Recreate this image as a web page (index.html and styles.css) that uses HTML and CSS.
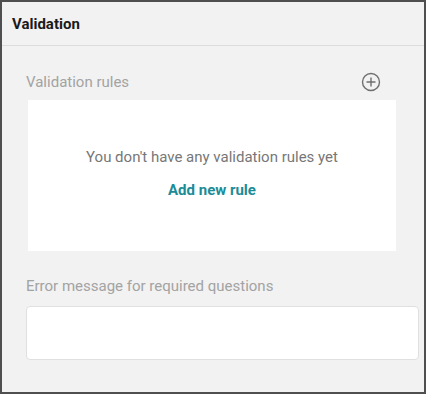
FILE: index.html
```html
<!DOCTYPE html>
<html>
<head>
<meta charset="utf-8">
<link rel="stylesheet" href="styles.css">
</head>
<body>
<div class="panel">
  <div class="panel-header">Validation</div>
  <div class="panel-body">
    <div class="rules-head">
      <span class="label">Validation rules</span>
      <span class="add-btn">
        <svg width="20" height="20" viewBox="0 0 20 20">
          <circle cx="10" cy="10" r="8.5" fill="none" stroke="#6f6f6f" stroke-width="1.4"/>
          <path d="M10 5.5v9M5.5 10h9" stroke="#6f6f6f" stroke-width="1.4" fill="none"/>
        </svg>
      </span>
    </div>
    <div class="rules-box">
      <p class="empty">You don't have any validation rules yet</p>
      <span class="add-link">Add new rule</span>
    </div>
    <div class="label err-label">Error message for required questions</div>
    <div class="err-input"></div>
  </div>
</div>
</body>
</html>
```
FILE: styles.css
```css
html, body {
  margin: 0;
  padding: 0;
  background: #ffffff;
}
body {
  font-family: Roboto, "Liberation Sans", sans-serif;
}
.panel {
  width: 426px;
  height: 394px;
  box-sizing: border-box;
  border: 2px solid #4f4f4f;
  background: #f2f2f2;
  display: flex;
  flex-direction: column;
}
.panel-header {
  height: 44px;
  box-sizing: border-box;
  border-bottom: 1px solid #dcdcdc;
  padding-left: 10px;
  padding-top: 1px;
  display: flex;
  align-items: center;
  font-size: 15px;
  font-weight: 700;
  color: #1a1a1a;
}
.panel-body {
  padding-left: 24px;
  display: flex;
  flex-direction: column;
  align-items: flex-start;
}
.rules-head {
  margin-top: 25px;
  width: 370px;
  height: 22px;
  display: flex;
  align-items: center;
  justify-content: space-between;
  padding-right: 15px;
  box-sizing: border-box;
}
.label {
  font-size: 15px;
  color: #a3a3a3;
  line-height: 20px;
}
.add-btn {
  display: flex;
  width: 20px;
  height: 20px;
}
.rules-box {
  margin-top: 7px;
  margin-left: 2px;
  width: 368px;
  height: 151px;
  box-sizing: border-box;
  background: #ffffff;
  display: flex;
  flex-direction: column;
  align-items: center;
  padding-top: 47px;
}
.empty {
  margin: 0;
  font-size: 15px;
  line-height: 20px;
  color: #777777;
}
.add-link {
  margin-top: 13px;
  font-size: 15px;
  line-height: 20px;
  font-weight: 700;
  color: #1b8c97;
}
.err-label {
  margin-top: 25px;
}
.err-input {
  margin-top: 10px;
  width: 393px;
  height: 54px;
  box-sizing: border-box;
  background: #ffffff;
  border: 1px solid #e0e0e0;
  border-radius: 4px;
}
```
